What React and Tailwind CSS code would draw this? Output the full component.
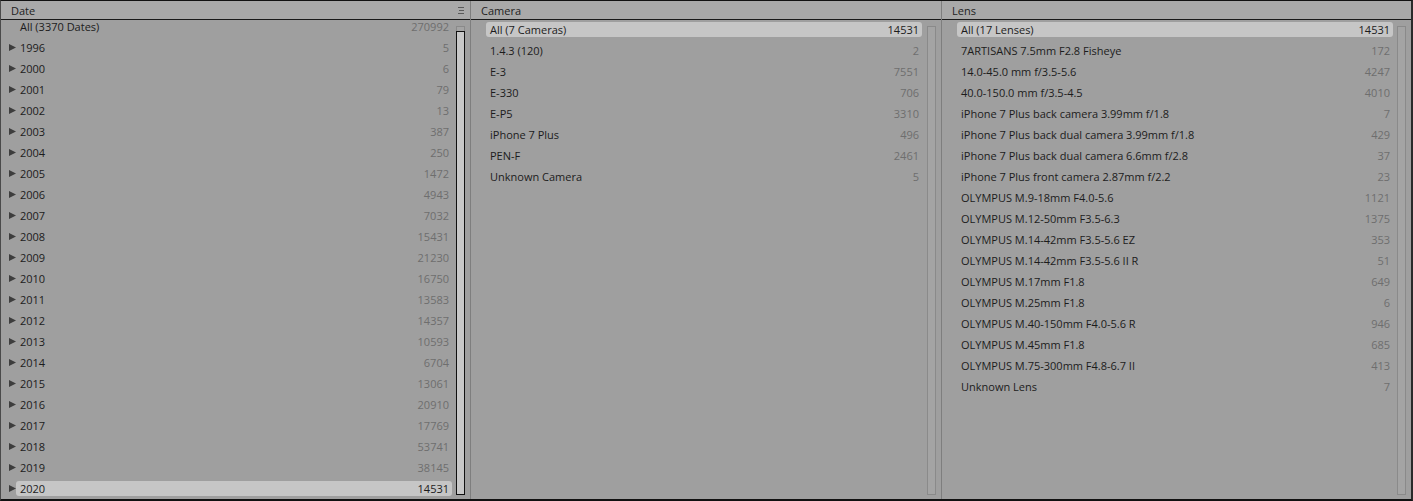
import React from "react";

const dates = [
  ["All (3370 Dates)", "270992", false, false],
  ["1996", "5", true], ["2000", "6", true], ["2001", "79", true], ["2002", "13", true],
  ["2003", "387", true], ["2004", "250", true], ["2005", "1472", true], ["2006", "4943", true],
  ["2007", "7032", true], ["2008", "15431", true], ["2009", "21230", true], ["2010", "16750", true],
  ["2011", "13583", true], ["2012", "14357", true], ["2013", "10593", true], ["2014", "6704", true],
  ["2015", "13061", true], ["2016", "20910", true], ["2017", "17769", true], ["2018", "53741", true],
  ["2019", "38145", true], ["2020", "14531", true, true],
];

const cameras = [
  ["All (7 Cameras)", "14531", false, true],
  ["1.4.3 (120)", "2"], ["E-3", "7551"], ["E-330", "706"], ["E-P5", "3310"],
  ["iPhone 7 Plus", "496"], ["PEN-F", "2461"], ["Unknown Camera", "5"],
];

const lenses = [
  ["All (17 Lenses)", "14531", false, true],
  ["7ARTISANS 7.5mm F2.8 Fisheye", "172"],
  ["14.0-45.0 mm f/3.5-5.6", "4247"],
  ["40.0-150.0 mm f/3.5-4.5", "4010"],
  ["iPhone 7 Plus back camera 3.99mm f/1.8", "7"],
  ["iPhone 7 Plus back dual camera 3.99mm f/1.8", "429"],
  ["iPhone 7 Plus back dual camera 6.6mm f/2.8", "37"],
  ["iPhone 7 Plus front camera 2.87mm f/2.2", "23"],
  ["OLYMPUS M.9-18mm F4.0-5.6", "1121"],
  ["OLYMPUS M.12-50mm F3.5-6.3", "1375"],
  ["OLYMPUS M.14-42mm F3.5-5.6 EZ", "353"],
  ["OLYMPUS M.14-42mm F3.5-5.6 II R", "51"],
  ["OLYMPUS M.17mm F1.8", "649"],
  ["OLYMPUS M.25mm F1.8", "6"],
  ["OLYMPUS M.40-150mm F4.0-5.6 R", "946"],
  ["OLYMPUS M.45mm F1.8", "685"],
  ["OLYMPUS M.75-300mm F4.8-6.7 II", "413"],
  ["Unknown Lens", "7"],
];

function Row({ label, count, arrow, selected }) {
  return (
    <div className="h-[21px] flex items-center shrink-0">
      <div className="w-[15px] shrink-0 pl-[8px] flex items-center">
        {arrow && (
          <svg width="7" height="7" viewBox="0 0 7 7">
            <polygon points="0,0 7,3.5 0,7" fill="#3d3d3d" />
          </svg>
        )}
      </div>
      <div
        className={`h-[15px] w-[436px] shrink-0 rounded-[3px] pl-[4px] pr-[3px] flex items-center justify-between ${
          selected ? "bg-[#c6c6c6]" : ""
        }`}
      >
        <span className="text-[#1c1c1c] whitespace-nowrap">{label}</span>
        <span className={selected ? "text-[#1c1c1c]" : "text-[#6e6e6e]"}>{count}</span>
      </div>
    </div>
  );
}

function Column({ title, items, menu, scrolled, width }) {
  return (
    <div className={`${width} shrink-0 flex flex-col`}>
      <div className="h-[19px] shrink-0 bg-[#a9a9a9] border-b border-[#1a1a1a] flex items-center justify-between pl-[10px] pr-[5px]">
        <span className="text-[#1e1e1e]">{title}</span>
        {menu && (
          <svg width="6" height="7" viewBox="0 0 6 7" className="mr-[1px]">
            <path d="M0 0.5H6M1 3.5H6M0 6.5H6" stroke="#5a5a5a" strokeWidth="1" />
          </svg>
        )}
      </div>
      <div className="flex-1 flex min-h-0 bg-[#9f9f9f]">
        <div className="flex-1 overflow-hidden">
          <div className={`flex flex-col ${scrolled ? "-mt-[4px]" : "-mt-[1px]"}`}>
            {items.map(([label, count, arrow, selected]) => (
              <Row key={label} label={label} count={count} arrow={arrow} selected={selected} />
            ))}
          </div>
        </div>
        <div className="w-[9px] shrink-0 mt-[6px] mb-[4px] mr-[5px] ml-[4px] border border-[#8a8a8a] bg-[#a4a4a4] flex flex-col">
          {scrolled && (
            <div className="mt-[4px] -mx-[1px] -mb-[1px] flex-1 border border-[#111] bg-[#c8c8c8]" />
          )}
        </div>
      </div>
    </div>
  );
}

export default function App() {
  return (
    <div
      className="w-[1413px] h-[501px] flex border-t border-[#111] border-l border-l-[#4a4a4a] border-r-2 border-r-[#2a2a2a] border-b-2 border-b-[#111] overflow-hidden text-[11px] leading-none"
      style={{ fontFamily: '"Open Sans", "DejaVu Sans", sans-serif' }}
    >
      <Column title="Date" items={dates} menu scrolled width="w-[469px]" />
      <div className="w-px shrink-0 bg-[#7e7e7e]" />
      <Column title="Camera" items={cameras} width="w-[470px]" />
      <div className="w-px shrink-0 bg-[#7e7e7e]" />
      <Column title="Lens" items={lenses} width="flex-1" />
    </div>
  );
}
